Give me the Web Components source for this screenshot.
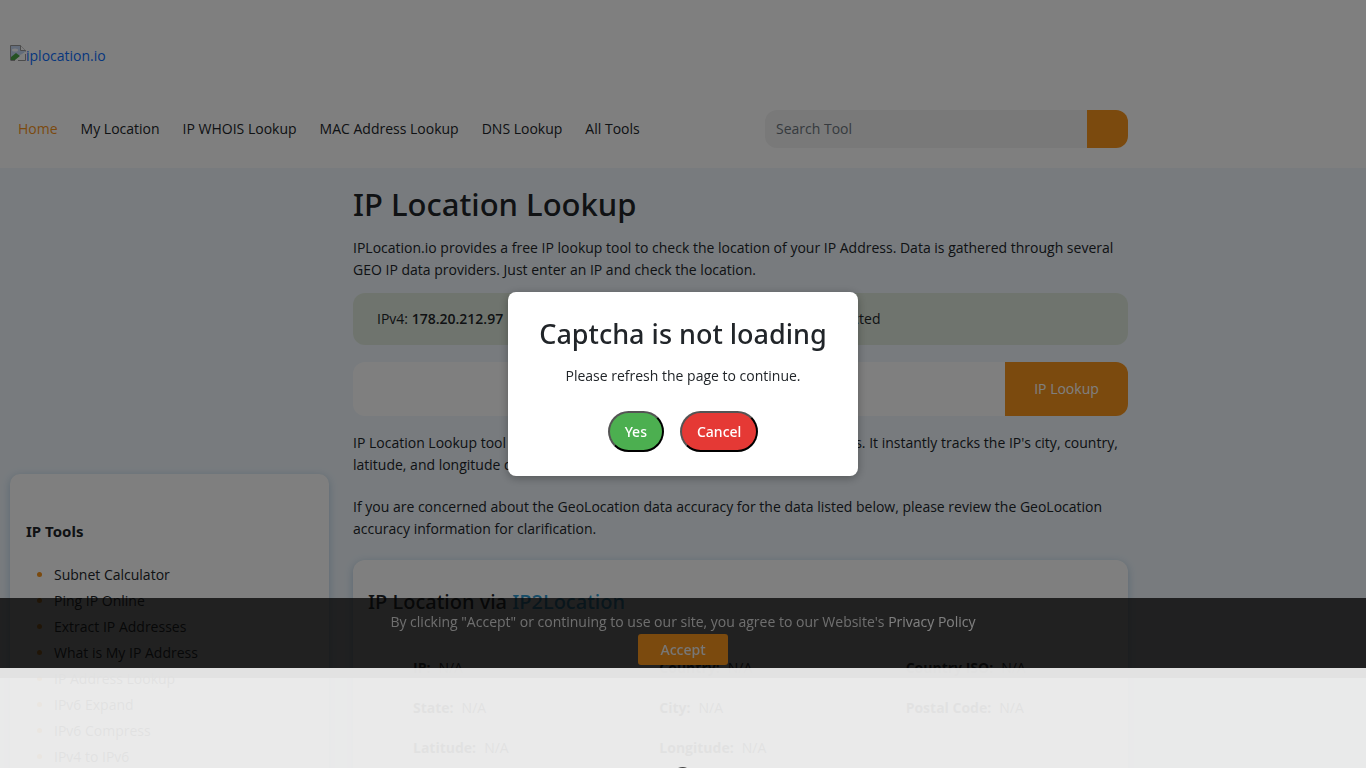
<!DOCTYPE html>
<html lang="en">
<head>
<meta charset="utf-8">
<title>IP Location Lookup</title>
<style>
  body { margin: 0; height: 100vh; overflow: hidden; background: #f0f7fd; color: #212529; font: 14px/22px "Open Sans", "Noto Sans", sans-serif; --heading: "Noto Sans", sans-serif; }
</style>
</head>
<body>
<site-header></site-header>
<page-layout>
  <tools-list slot="side"></tools-list>
  <lookup-panel></lookup-panel>
  <result-card></result-card>
</page-layout>
<cookie-bar></cookie-bar>
<captcha-dialog heading="Captcha is not loading">Please refresh the page to continue.</captcha-dialog>
<anchor-strip></anchor-strip>
<script>
const define = (name, html, setup) => customElements.define(name, class extends HTMLElement {
  constructor() {
    super();
    this.attachShadow({ mode: 'open' }).innerHTML = '<style>*{box-sizing:border-box}a{text-decoration:none;color:inherit}button,input{font:inherit}h1,h2{font-family:var(--heading)}</style>' + html;
    if (setup) setup(this, this.shadowRoot);
  }
});

define('site-header', `
<style>
  :host { display: block; background: #fff; padding: 45px 10px 20px; }
  .inner { max-width: 1118px; }
  .logo { display: flex; color: #0d6efd; height: 65px; }
  .logo svg { width: 16px; height: 16px; }
  .row { display: flex; justify-content: space-between; align-items: center; }
  nav { display: flex; gap: 23px; padding-left: 8px; }
  nav a:first-child { color: #f7941d; }
  form { display: flex; width: 363px; height: 38px; }
  input { flex: 1; min-width: 0; border: 0; border-radius: 12px 0 0 12px; background: #f2f2f2; padding: 0 11px; font-size: 14px; }
  input::placeholder { color: #6c757d; }
  button { width: 41px; border: 0; border-radius: 0 12px 12px 0; background: #f7941d; }
</style>
<div class="inner">
  <a class="logo" href="#"><svg viewBox="0 0 16 16" aria-hidden="true"><path d="M.5 15.500V.5h10l5 5V7" fill="#c7d9f5" stroke="#999"/><path d="M10.500.5v5h5" fill="#fff" stroke="#999"/><path d="M1 15V12l5-4 4 3-5 4z" fill="#4aa547"/><ellipse cx="5" cy="5" rx="3" ry="1.500" fill="#fff"/><path d="M5 16 16 6v10z" fill="#fff"/><path d="M1 15.500h4M15.500 9v6.500H8" fill="none" stroke="#999"/></svg><span>iplocation.io</span></a>
  <div class="row">
    <nav><a href="#">Home</a><a href="#">My Location</a><a href="#">IP WHOIS Lookup</a><a href="#">MAC Address Lookup</a><a href="#">DNS Lookup</a><a href="#">All Tools</a></nav>
    <form><input type="text" placeholder="Search Tool" aria-label="Search Tool"><button type="button" aria-label="Search"></button></form>
  </div>
</div>`);

define('page-layout', `
<style>
  :host { display: block; padding: 0 10px; }
  .grid { display: grid; max-width: 1118px; grid-template-columns: 319px minmax(0, 1fr); gap: 24px; align-items: start; }
  aside { padding-top: 306px; }
</style>
<div class="grid"><aside><slot name="side"></slot></aside><main><slot></slot></main></div>`);

define('tools-list', `
<style>
  :host { display: block; background: #fff; border-radius: 10px; box-shadow: 0 2px 8px #b4cfe4; padding: 45px 16px 16px; }
  h2 { margin: 0; font-size: 15px; line-height: 24px; font-weight: 700; }
  ul { margin: 19px 0 0; padding-left: 28px; line-height: 26px; }
  li::marker { color: #f7941d; }
</style>
<h2>IP Tools</h2><ul></ul>`, (host, root) => {
  const items = ['Subnet Calculator', 'Ping IP Online', 'Extract IP Addresses', 'What is My IP Address', 'IP Address Lookup', 'IPv6 Expand', 'IPv6 Compress', 'IPv4 to IPv6'];
  root.querySelector('ul').innerHTML = items.map(t => `<li><a href="#">${t}</a></li>`).join('');
});

define('lookup-panel', `
<style>
  :host { display: block; padding-top: 16px; }
  h1 { margin: 0 0 13px; font-size: 31px; line-height: 40px; font-weight: 500; }
  p { margin: 0 0 20px; }
  .intro { margin-bottom: 12px; }
  .ip { display: flex; align-items: center; gap: 256px; height: 52px; margin-bottom: 17px; padding: 0 24px; border-radius: 12px; background: #dfe9dc; white-space: nowrap; }
  .ip b { font-weight: 600; }
  form { display: flex; height: 54px; margin-bottom: 16px; }
  input { flex: 1; min-width: 0; border: 0; border-radius: 12px 0 0 12px; background: #fff; }
  button { width: 123px; border: 0; border-radius: 0 12px 12px 0; background: #f7941d; color: #fff; }
</style>
<h1>IP Location Lookup</h1>
<p class="intro">IPLocation.io provides a free IP lookup tool to check the location of your IP Address. Data is gathered through several GEO IP data providers. Just enter an IP and check the location.</p>
<div class="ip"><span>IPv4: <b>178.20.212.97</b></span><span>IPv6: Not Detected</span></div>
<form><input type="text" aria-label="IP address"><button type="button">IP Lookup</button></form>
<p>IP Location Lookup tool provides free location tracking of any given IP Address. It instantly tracks the IP's city, country, latitude, and longitude data.</p>
<p>If you are concerned about the GeoLocation data accuracy for the data listed below, please review the GeoLocation accuracy information for clarification.</p>`);

define('result-card', `
<style>
  :host { display: block; background: #fff; border-radius: 12px; box-shadow: 0 2px 8px #b4cfe4; padding: 29px 15px; }
  h2 { margin: 0 0 20px; font-size: 20px; line-height: 26px; font-weight: 500; }
  h2 a { color: #2e9ad0; }
  dl { display: grid; grid-template-columns: repeat(3, 1fr); row-gap: 18px; margin: 0; padding: 22px 3px; background: #fafafa; border-radius: 8px; }
  dl div { display: flex; gap: 8px; padding-left: 42px; }
  dt { font-weight: 700; }
  dd { margin: 0; }
</style>
<h2>IP Location via <a href="#">IP2Location</a></h2><dl></dl>`, (host, root) => {
  root.querySelector('dl').innerHTML = ['IP', 'Country', 'Country ISO', 'State', 'City', 'Postal Code', 'Latitude', 'Longitude'].map(t => `<div><dt>${t}:</dt><dd>N/A</dd></div>`).join('');
});

define('cookie-bar', `
<style>
  :host { position: fixed; left: 0; right: 0; bottom: 90px; height: 80px; padding-top: 13px; background: rgba(10, 10, 10, .77); color: #ddd; text-align: center; box-sizing: border-box; }
  a { color: #fff; }
  button { display: block; width: 90px; height: 31px; margin: 1px auto 0; padding: 0; border: 0; border-radius: 3px; background: #f7941d; color: #eee; font-family: var(--heading); font-weight: 500; }
</style>
By clicking "Accept" or continuing to use our site, you agree to our Website's <a href="#">Privacy Policy</a>
<button type="button">Accept</button>`);

define('captcha-dialog', `
<style>
  :host { position: fixed; inset: 0; display: grid; place-items: center; background: rgba(0, 0, 0, .5); }
  section { padding: 24px 31px; border-radius: 8px; background: #fff; text-align: center; box-shadow: 0 2px 10px rgba(0, 0, 0, .3); }
  h2 { margin: 0 0 13px; font-size: 27px; line-height: 36px; font-weight: 500; }
  p { margin: 0 0 24px; }
  .actions { display: flex; justify-content: center; gap: 16px; }
  button { height: 41px; padding: 0 15px; border: 2px outset #000; border-radius: 24px; background: #4caf50; color: #fff; font-family: var(--heading); font-weight: 500; }
  .cancel { background: #e53935; }
</style>
<section role="dialog" aria-labelledby="t"><h2 id="t"></h2><p><slot></slot></p>
<div class="actions"><button type="button">Yes</button><button type="button" class="cancel">Cancel</button></div></section>`, (host, root) => {
  root.querySelector('h2').textContent = host.getAttribute('heading');
});

define('anchor-strip', `
<style>
  :host { position: fixed; left: 0; right: 0; bottom: 0; height: 100px; background: rgba(243, 243, 243, .92); overflow: hidden; display: flex; align-items: flex-end; justify-content: center; }
  svg { width: 20px; height: 2px; }
</style>
<svg viewBox="0 0 20 2" aria-hidden="true"><path d="M5 2Q10 0 14 2z" fill="#444"/></svg>`);
</script>
</body>
</html>
